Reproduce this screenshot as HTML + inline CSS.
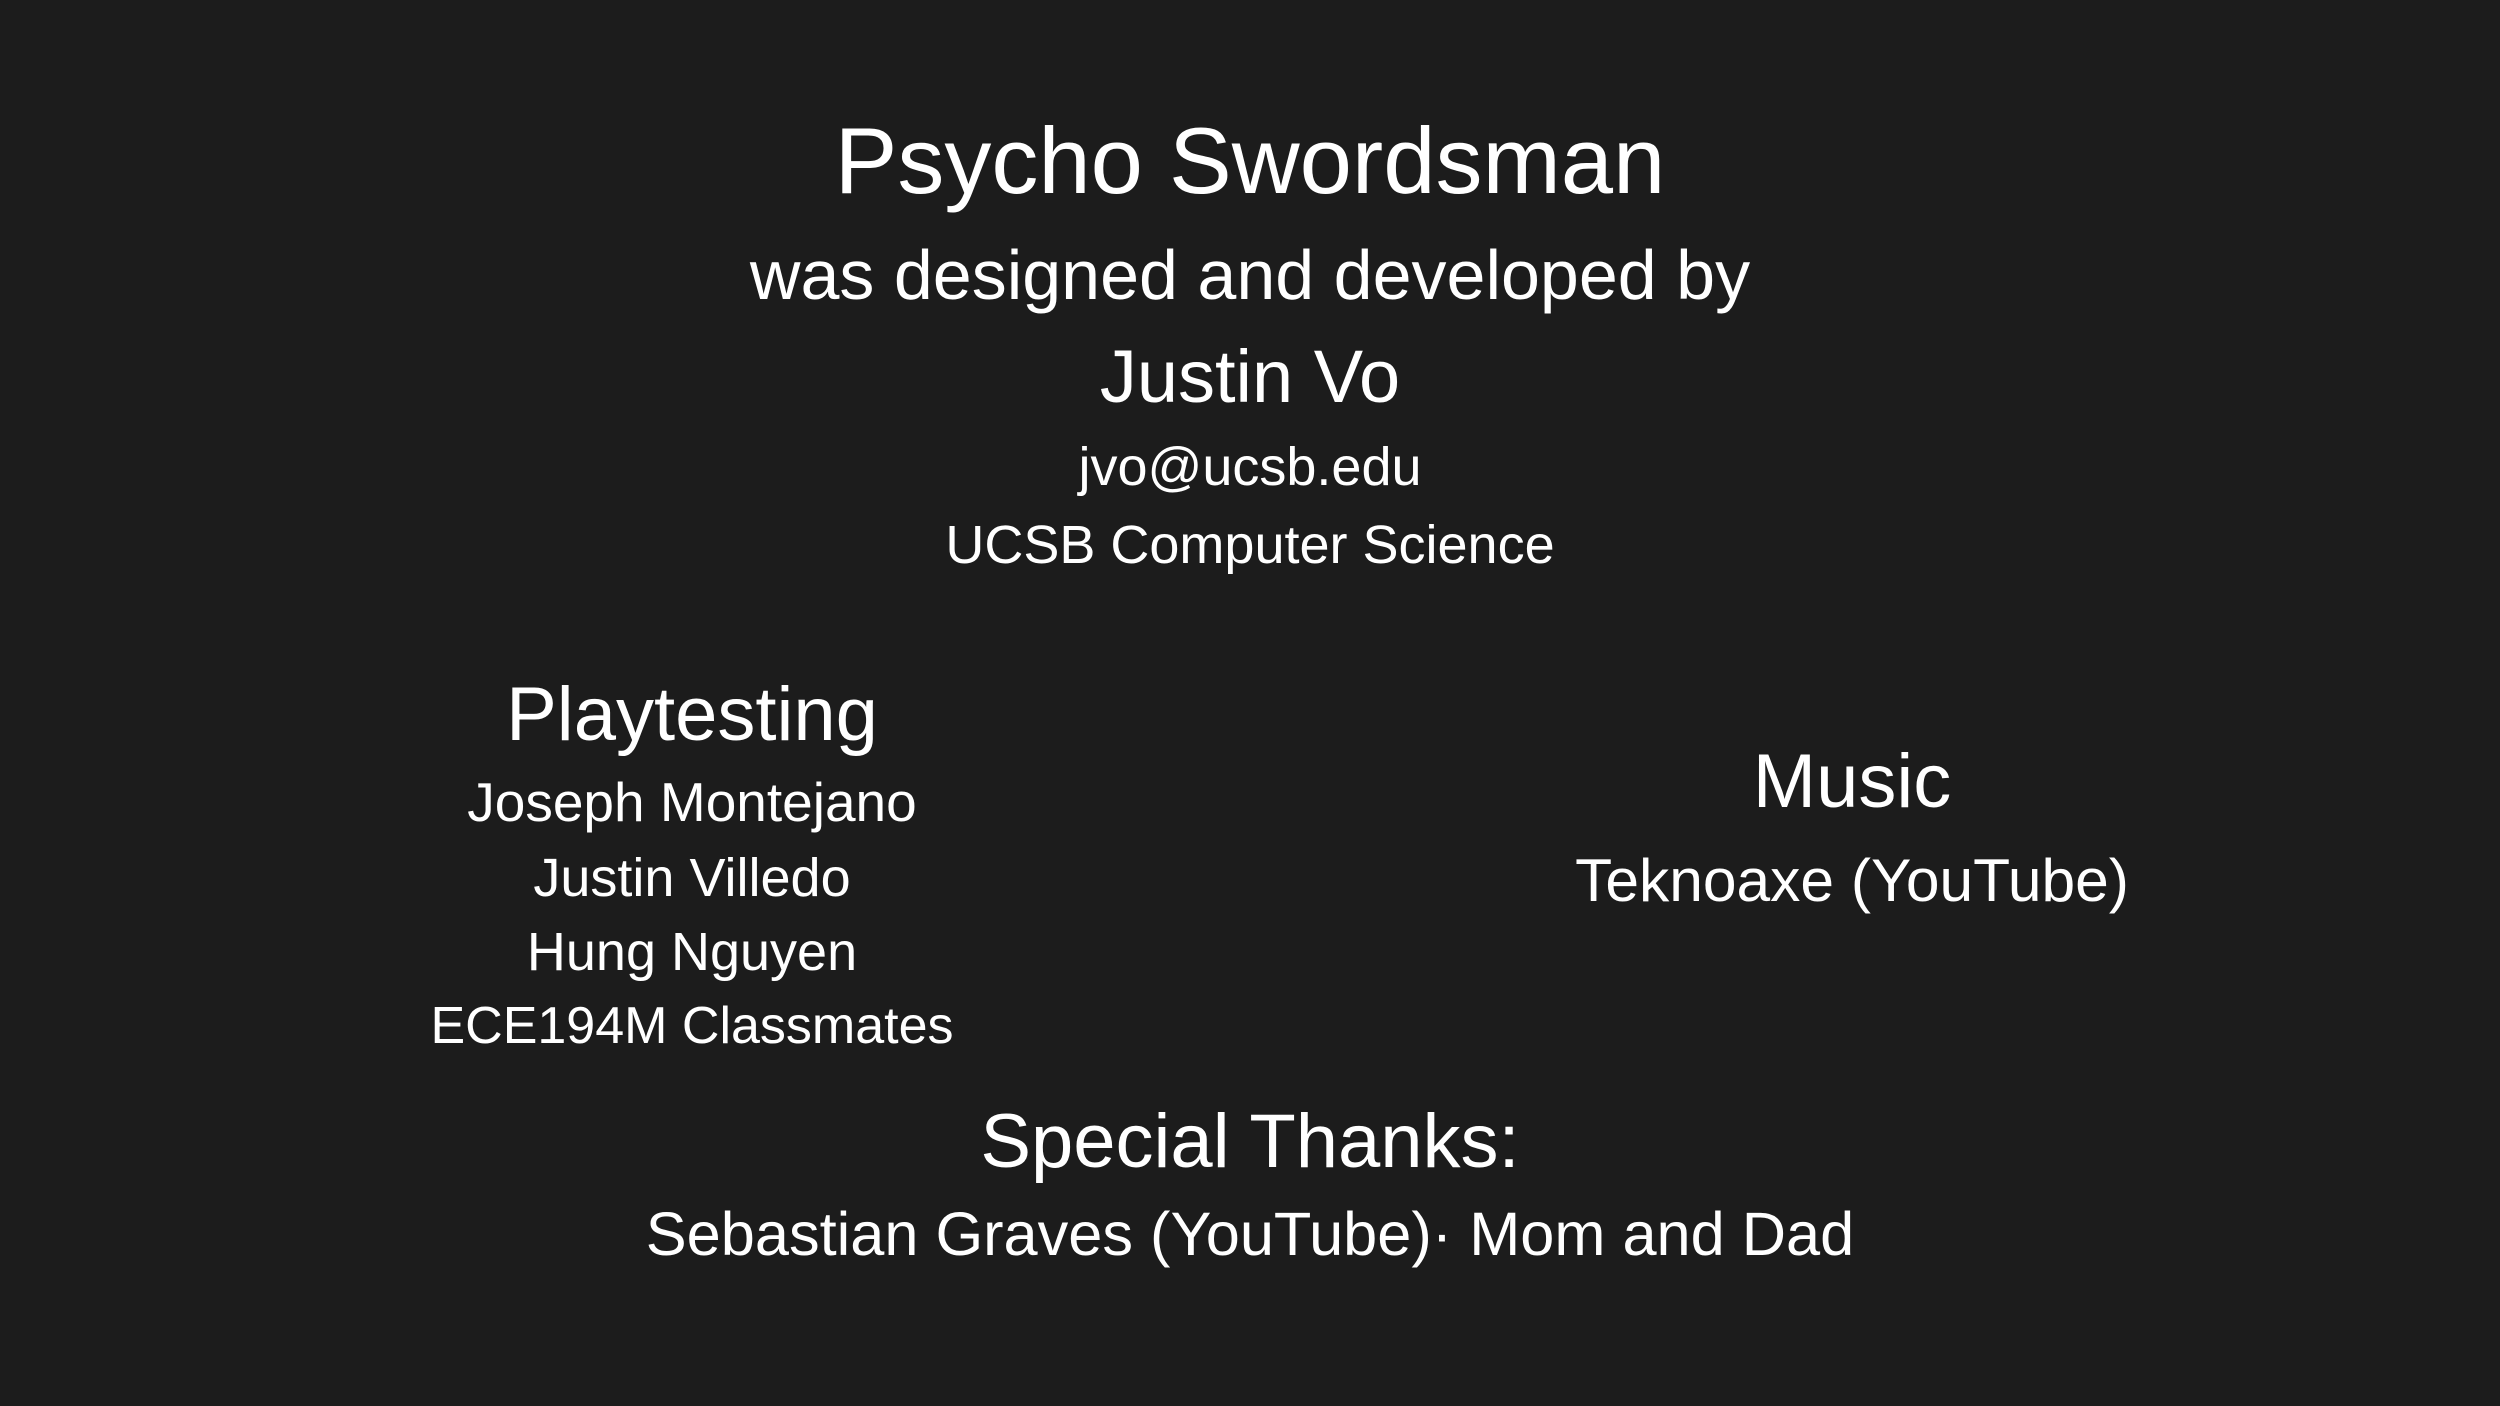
<!DOCTYPE html>
<html><head><meta charset="utf-8"><style>
html,body{margin:0;padding:0;background:#1c1c1c;}
body{width:2500px;height:1406px;position:relative;overflow:hidden;font-family:"Liberation Sans",sans-serif;color:#fff;}
.l{position:absolute;line-height:1;white-space:nowrap;transform:translateX(-50%);}
</style></head><body>
<div class="l" style="left:1250px;top:114px;font-size:94px">Psycho Swordsman</div>
<div class="l" style="left:1250px;top:240px;font-size:70px">was designed and developed by</div>
<div class="l" style="left:1250px;top:340px;font-size:74px">Justin Vo</div>
<div class="l" style="left:1250px;top:440px;font-size:54px">jvo@ucsb.edu</div>
<div class="l" style="left:1250px;top:518px;font-size:54px">UCSB Computer Science</div>

<div class="l" style="left:692px;top:677px;font-size:76px">Playtesting</div>
<div class="l" style="left:692px;top:775px;font-size:55px">Joseph Montejano</div>
<div class="l" style="left:692px;top:851px;font-size:54px">Justin Villedo</div>
<div class="l" style="left:692px;top:925px;font-size:54px">Hung Nguyen</div>
<div class="l" style="left:692px;top:1000px;font-size:52px">ECE194M Classmates</div>

<div class="l" style="left:1852px;top:744px;font-size:76px">Music</div>
<div class="l" style="left:1852px;top:850px;font-size:60.5px">Teknoaxe (YouTube)</div>

<div class="l" style="left:1250px;top:1104px;font-size:76px">Special Thanks:</div>
<div class="l" style="left:1250px;top:1204px;font-size:61.3px">Sebastian Graves (YouTube)· Mom and Dad</div>
</body></html>
